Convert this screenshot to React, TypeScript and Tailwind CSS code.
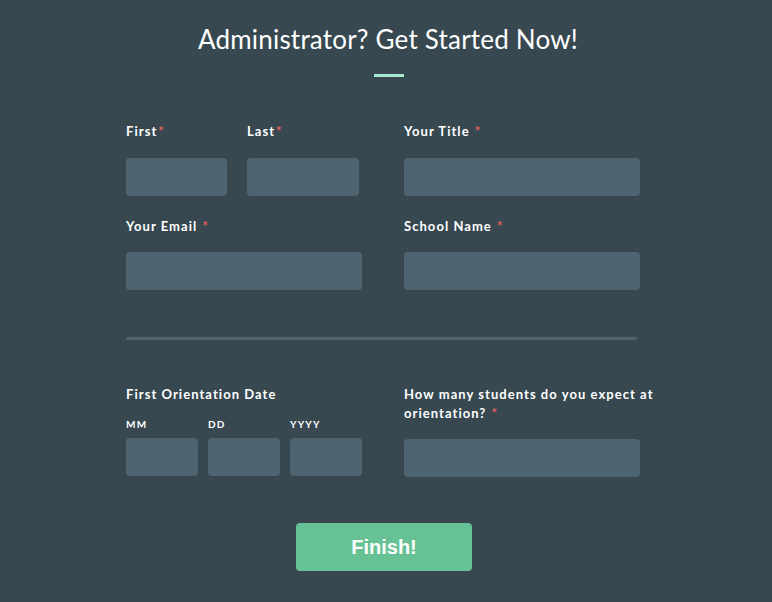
import React from 'react';

const font = { fontFamily: 'Lato, "Open Sans", sans-serif' };

const Star = () => <span className="ml-[1px] text-[#e2625c]">*</span>;

const Label: React.FC<{ children: React.ReactNode; className?: string }> = ({ children, className = '' }) => (
  <label className={`block text-[13px] font-bold leading-[19px] tracking-[1.05px] text-white ${className}`}>
    {children}
  </label>
);

const Field: React.FC<{ className?: string }> = ({ className = '' }) => (
  <input
    className={`block h-[38px] rounded-[4px] bg-[#4e6571] outline-none ${className}`}
    type="text"
  />
);

export default function App() {
  return (
    <div className="min-h-[602px] w-[772px] bg-[#374851]" style={font}>
      <div className="pt-[23px] text-center">
        <h1 className="text-[26px] leading-[32px] tracking-[0.2px] text-white translate-x-[2px]">
          Administrator? Get Started Now!
        </h1>
        <div className="mx-auto mt-[19px] h-[3px] w-[30px] bg-[#a7ead0] translate-x-[3px]" />
      </div>

      <div className="ml-[126px] mt-[45px] w-[514px]">
        <div className="grid grid-cols-2 gap-x-[42px]">
          <div className="flex gap-[20px]">
            <div>
              <Label>
                First<Star />
              </Label>
              <Field className="mt-[17px] w-[101px]" />
            </div>
            <div>
              <Label>
                Last<Star />
              </Label>
              <Field className="mt-[17px] w-[112px]" />
            </div>
          </div>
          <div>
            <Label>
              Your Title <Star />
            </Label>
            <Field className="mt-[17px] w-[236px]" />
          </div>
          <div className="mt-[21px]">
            <Label>
              Your Email <Star />
            </Label>
            <Field className="mt-[16px] w-[236px]" />
          </div>
          <div className="mt-[21px]">
            <Label>
              School Name <Star />
            </Label>
            <Field className="mt-[16px] w-[236px]" />
          </div>
        </div>

        <div className="mt-[47px] h-[3px] w-[511px] rounded-full bg-[#4e6571]" />

        <div className="mt-[45px] grid grid-cols-2 gap-x-[42px]">
          <div>
            <Label>First Orientation Date</Label>
            <div className="mt-[13px] flex gap-[10px]">
              {['MM', 'DD', 'YYYY'].map((l) => (
                <div key={l}>
                  <div className="text-[10px] font-bold leading-[14px] tracking-[1.2px] text-white">{l}</div>
                  <Field className="mt-[7px] w-[72px]" />
                </div>
              ))}
            </div>
          </div>
          <div>
            <Label className="w-[262px]">
              How many students do you expect at orientation? <Star />
            </Label>
            <Field className="mt-[16px] w-[236px]" />
          </div>
        </div>
      </div>

      <div className="mt-[46px] flex justify-center">
        <button
          className="h-[48px] w-[176px] rounded-[4px] bg-[#66c194] text-[20px] font-bold text-white -translate-x-[2px]"
          style={{ fontFamily: '"Liberation Sans", Arial, sans-serif' }}
        >
          Finish!
        </button>
      </div>
    </div>
  );
}
